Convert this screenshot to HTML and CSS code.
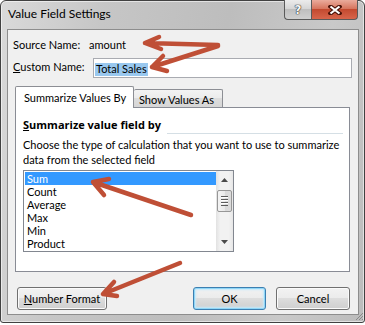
FILE: index.html
```html
<!DOCTYPE html>
<html lang="en">
<head>
    <meta charset="UTF-8">
    <title>Value Field Settings</title>
    <link rel="stylesheet" href="styles.css">
</head>
<body>
    <div class="window">
        <div class="titlebar">
            <span class="title">Value Field Settings</span>
            <div class="caption-buttons">
                <span class="cap-btn help">?</span>
                <span class="cap-btn close">
                    <svg width="14" height="10" viewBox="0 0 14 10">
                        <path d="M2.5 1.5 L11.5 8.5 M11.5 1.5 L2.5 8.5" stroke="#4a1208" stroke-width="4.2" stroke-linecap="square"/>
                        <path d="M2.5 1.5 L11.5 8.5 M11.5 1.5 L2.5 8.5" stroke="#ffffff" stroke-width="2.2"/>
                    </svg>
                </span>
            </div>
        </div>

        <div class="client">
            <div class="row source">
                <span class="label">Source Name:</span>
                <span class="value">amount</span>
            </div>
            <div class="row custom">
                <label class="label" for="custom"><u>C</u>ustom Name:</label>
                <div class="textbox" id="custom"><span class="selection">Total Sales</span></div>
            </div>

            <div class="tabs">
                <div class="tab active">Summarize Values By</div>
                <div class="tab">Show Values As</div>
            </div>
            <div class="panel">
                <div class="group-head">
                    <span><u>S</u>ummarize value field by</span>
                    <span class="rule"></span>
                </div>
                <p class="desc">Choose the type of calculation that you want to use to summarize<br>data from the selected field</p>
                <div class="listbox">
                    <ul class="items">
                        <li class="selected">Sum</li>
                        <li>Count</li>
                        <li>Average</li>
                        <li>Max</li>
                        <li>Min</li>
                        <li>Product</li>
                    </ul>
                    <div class="scrollbar">
                        <span class="arrow-box">
                            <svg width="7" height="4" viewBox="0 0 7 4"><polygon points="3.5,0 7,4 0,4" fill="#4b4b4b"/></svg>
                        </span>
                        <span class="thumb"><span class="grip-lines"></span></span>
                        <span class="track"></span>
                        <span class="arrow-box down">
                            <svg width="7" height="4" viewBox="0 0 7 4"><polygon points="0,0 7,0 3.5,4" fill="#4b4b4b"/></svg>
                        </span>
                    </div>
                </div>
            </div>

            <div class="buttons">
                <button class="btn number-format"><u>N</u>umber Format</button>
                <button class="btn ok">OK</button>
                <button class="btn">Cancel</button>
            </div>
        </div>

        <svg class="size-grip" width="10" height="10" viewBox="0 0 10 10">
            <path d="M9 2 L2 9 M9 5 L5 9 M9 8 L8 9" stroke="#8a8a8a" stroke-width="1"/>
        </svg>
    </div>

    <!-- callout arrows drawn over the dialog -->
    <svg class="arrows" width="365" height="325" viewBox="0 0 365 325">
        <g fill="none" stroke="#bf4f36" stroke-width="4.5" stroke-linecap="round" stroke-linejoin="round">
            <path d="M218 45 L145 43 M159 37 L145 43 L161 49"/>
            <path d="M218 46 L152 67 M163 56 L152 67 L167 71"/>
            <path d="M191 215 L93 182 M109 179 L93 182 L104 195"/>
            <path d="M180 263 L103 294 M114 282 L103 294 L117 296"/>
        </g>
    </svg>
</body>
</html>
```

FILE: styles.css
```css
/* Dialog frame */
body {
    margin: 0;
    background: #ffffff;
    font-family: Lato, "Open Sans", sans-serif;
    font-size: 11px;
    color: #000000;
}

.window {
    position: relative;
    width: 365px;
    height: 323px;
    box-sizing: border-box;
    padding: 0 5px 0 6px;
    border: 1px solid #414141;
    border-radius: 6px 6px 3px 3px;
    background: linear-gradient(100deg, #dadada 0%, #c6c6c6 25%, #bdbdbd 55%, #c9c9c9 80%, #bcbcbc 100%);
    box-shadow: inset 0 0 0 1px rgba(255, 255, 255, 0.55);
}

.titlebar {
    display: flex;
    justify-content: space-between;
    height: 28px;
}

.title {
    padding: 5px 0 0 1px;
    font-size: 12px;
    line-height: 15px;
}

.caption-buttons {
    display: flex;
    height: 20px;
    margin: -1px 1px 0 0;
}

.cap-btn {
    display: flex;
    align-items: center;
    justify-content: center;
    height: 20px;
    box-sizing: border-box;
    border: 1px solid #5a5a5a;
    border-top: none;
}

.help {
    width: 27px;
    border-right: none;
    border-radius: 0 0 0 4px;
    background: linear-gradient(#ececec, #d6d6d6 45%, #bfbfbf 50%, #d0d0d0);
    color: #f7f7f7;
    font-family: "DejaVu Sans", sans-serif;
    font-size: 12px;
    font-weight: bold;
    text-shadow: 0 0 1px #2e2e2e, 0 0 1px #2e2e2e, 0 0 1px #2e2e2e;
}

.close {
    width: 47px;
    border-radius: 0 0 4px 0;
    background: linear-gradient(#eaab9c, #d7765f 45%, #c34a30 50%, #d8654b);
}

/* Client area */
.client {
    height: 286px;
    box-sizing: border-box;
    padding: 7px 8px 0 7px;
    border: 1px solid #8d8d8d;
    background: #f0f0f0;
}

.row {
    display: flex;
    margin-left: -2px;
    line-height: 15px;
    white-space: nowrap;
}

.source .label {
    width: 76px;
}

.custom {
    height: 20px;
    margin-top: 6px;
}

.custom .label {
    width: 80px;
    padding-top: 1px;
}

.textbox {
    flex: 1;
    margin-right: -2px;
    height: 20px;
    box-sizing: border-box;
    padding: 2px 0 0 1px;
    border: 1px solid #a9abb1;
    background: #ffffff;
}

.selection {
    display: inline-block;
    height: 13px;
    padding: 0 1px;
    line-height: 11px;
    background: #99c8ef;
}

/* Tabs */
.tabs {
    display: flex;
    align-items: flex-end;
    height: 21px;
    margin-top: 8px;
}

.tab {
    box-sizing: border-box;
    border: 1px solid #8c8e94;
    border-bottom: none;
    border-radius: 2px 2px 0 0;
    line-height: 15px;
    white-space: nowrap;
}

.tab.active {
    position: relative;
    z-index: 1;
    width: 119px;
    height: 22px;
    margin-bottom: -1px;
    padding: 3px 0 0 8px;
    background: #ffffff;
}

.tab:not(.active) {
    width: 89px;
    height: 18px;
    padding: 2px 0 0 5px;
    border-left: none;
    background: linear-gradient(#f3f3f3, #ebebeb 50%, #dddddd 50%, #d6d6d6);
}

.panel {
    height: 165px;
    box-sizing: border-box;
    padding: 9px 6px 0 7px;
    border: 1px solid #898c95;
    background: #ffffff;
}

.group-head {
    display: flex;
    align-items: flex-end;
    font-family: "Open Sans", Lato, sans-serif;
    font-weight: bold;
    line-height: 15px;
    white-space: nowrap;
}

.rule {
    flex: 1;
    height: 1px;
    margin: 0 0 -2px 6px;
    background: #d5dfe5;
}

.desc {
    margin: 5px 0 0;
    line-height: 15px;
    white-space: nowrap;
}

/* List box */
.listbox {
    display: flex;
    width: 211px;
    height: 82px;
    box-sizing: border-box;
    margin-top: 3px;
    border: 1px solid #828790;
}

.items {
    flex: 1;
    margin: 0;
    padding: 1px 0 0 1px;
    list-style: none;
}

.items li {
    padding-left: 2px;
    line-height: 13px;
    height: 13px;
}

.items .selected {
    background: #3399ff;
    color: #ffffff;
}

.scrollbar {
    display: flex;
    flex-direction: column;
    width: 17px;
    background: linear-gradient(90deg, #e2e2e2, #f2f2f2 25%, #f2f2f2 75%, #e7e7e7);
}

.arrow-box {
    display: flex;
    align-items: center;
    justify-content: center;
    height: 17px;
}

.arrow-box.down {
    align-items: flex-start;
    padding-top: 6px;
    box-sizing: border-box;
}

.thumb {
    display: flex;
    align-items: center;
    justify-content: center;
    height: 22px;
    box-sizing: border-box;
    margin: 2px 1px 0;
    border: 1px solid #979797;
    border-radius: 2px;
    background: linear-gradient(90deg, #f4f4f4, #e9e9e9 50%, #d9d9d9 50%, #dcdcdc);
}

.grip-lines {
    width: 7px;
    height: 10px;
    background: repeating-linear-gradient(180deg, #5c5c5c 0 1px, #ffffff 1px 2px, transparent 2px 3px);
}

.track {
    flex: 1;
}

/* Buttons */
.buttons {
    display: flex;
    margin-top: 15px;
    margin-left: 2px;
}

.btn {
    height: 23px;
    box-sizing: border-box;
    padding: 0 0 1px;
    border: 1px solid #707070;
    border-radius: 3px;
    background: linear-gradient(#f2f2f2, #ebebeb 50%, #dddddd 50%, #cfcfcf);
    box-shadow: inset 0 0 0 1px #fbfbfb;
    font: inherit;
    line-height: 15px;
    color: #000000;
}

.number-format {
    width: 90px;
    margin-right: auto;
}

.ok {
    width: 73px;
    margin-right: 10px;
    border-color: #3c7fb1;
    box-shadow: inset 0 0 0 1px #8fd6f7, inset 0 0 2px 2px #c4e9fb;
}

.buttons .btn:last-child {
    width: 74px;
}

.size-grip {
    position: absolute;
    right: 0;
    bottom: 1px;
}

.arrows {
    position: absolute;
    top: 0;
    left: 0;
    pointer-events: none;
}
```
